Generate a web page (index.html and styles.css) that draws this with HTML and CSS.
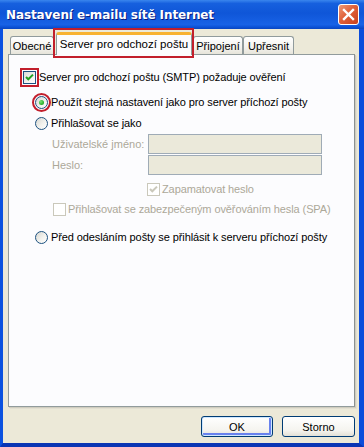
FILE: index.html
```html
<!DOCTYPE html>
<html lang="cs">
<head>
    <meta charset="UTF-8">
    <title>Nastavení e-mailu sítě Internet</title>
    <link rel="stylesheet" href="styles.css">
</head>
<body>
    <div class="window">
        <div class="titlebar">
            <span class="title">Nastavení e-mailu sítě Internet</span>
            <span class="close">
                <svg width="13" height="13" viewBox="0 0 13 13">
                    <path d="M2 2 L11 11 M11 2 L2 11" stroke="#fff" stroke-width="2.4" stroke-linecap="square"/>
                </svg>
            </span>
        </div>
        <div class="client">
            <div class="tabs">
                <div class="tab tab-general">Obecné</div>
                <div class="tab tab-active">Server pro odchozí poštu</div>
                <div class="tab tab-conn">Připojení</div>
                <div class="tab tab-adv">Upřesnit</div>
            </div>
            <div class="panel">
                <div class="row row-auth">
                    <span class="check flagged">
                        <svg width="11" height="11" viewBox="0 0 11 11"><path d="M2 5 L4.3 7.3 L9 2.6" fill="none" stroke="#21a121" stroke-width="2"/></svg>
                    </span>
                    <span class="label">Server pro odchozí poštu (SMTP) požaduje ověření</span>
                </div>
                <div class="row row-same">
                    <span class="radio selected flagged"><span class="dot"></span></span>
                    <span class="label">Použít stejná nastavení jako pro server příchozí pošty</span>
                </div>
                <div class="row row-login">
                    <span class="radio"></span>
                    <span class="label">Přihlašovat se jako</span>
                </div>
                <div class="field row-user">
                    <span class="field-label">Uživatelské jméno:</span>
                    <span class="input"></span>
                </div>
                <div class="field row-pass">
                    <span class="field-label">Heslo:</span>
                    <span class="input"></span>
                </div>
                <div class="row row-remember disabled">
                    <span class="check">
                        <svg width="11" height="11" viewBox="0 0 11 11"><path d="M2 5 L4.3 7.3 L9 2.6" fill="none" stroke="#cac8bb" stroke-width="2"/></svg>
                    </span>
                    <span class="label">Zapamatovat heslo</span>
                </div>
                <div class="row row-spa disabled">
                    <span class="check"></span>
                    <span class="label">Přihlašovat se zabezpečeným ověřováním hesla (SPA)</span>
                </div>
                <div class="row row-before">
                    <span class="radio"></span>
                    <span class="label">Před odesláním pošty se přihlásit k serveru příchozí pošty</span>
                </div>
            </div>
            <div class="buttons">
                <button class="btn btn-default">OK</button>
                <button class="btn">Storno</button>
            </div>
        </div>
    </div>
</body>
</html>
```
FILE: styles.css
```css
* {
    box-sizing: border-box;
    margin: 0;
    padding: 0;
}
body {
    font-family: 'Liberation Sans', Arial, sans-serif;
    font-size: 11px;
    color: #000;
    background: #ece9d8;
}
.window {
    width: 364px;
    height: 447px;
    display: flex;
    flex-direction: column;
    background: #0b4ddb;
}
.titlebar {
    height: 29px;
    display: flex;
    align-items: center;
    justify-content: space-between;
    padding: 0 5px 0 6px;
    background: linear-gradient(to bottom, #3a86ee 0%, #1660de 12%, #0f56d8 45%, #1862e6 85%, #0b50d4 94%, #0a45c0 100%);
}
.title {
    color: #fff;
    font-family: 'DejaVu Sans', sans-serif;
    font-weight: bold;
    font-size: 12px;
    text-shadow: 1px 1px 0 #0a1c80;
    letter-spacing: -0.1px;
}
.close {
    width: 21px;
    height: 21px;
    display: flex;
    align-items: center;
    justify-content: center;
    border: 1px solid #fff;
    border-radius: 3px;
    background: linear-gradient(135deg, #ee9a78 0%, #e0613a 45%, #c8401c 100%);
}
.client {
    flex: 1;
    display: flex;
    flex-direction: column;
    background: #ece9d8;
    border-left: 3px solid #0b52e0;
    border-right: 5px solid #0b4ddb;
    border-bottom: 4px solid #0a35b4;
    padding-top: 3px;
}
.tabs {
    height: 22px;
    display: flex;
    align-items: flex-end;
    padding-left: 7px;
    position: relative;
    z-index: 2;
}
.tab {
    height: 18px;
    display: flex;
    align-items: center;
    justify-content: center;
    border: 1px solid #919b9c;
    border-bottom: none;
    border-radius: 3px 3px 0 0;
    background: linear-gradient(to bottom, #fff 0%, #f4f3ee 60%, #e6e4da 100%);
    white-space: nowrap;
}
.tab-general {
    width: 44px;
}
.tab-active {
    position: relative;
    width: 136px;
    height: 23px;
    margin: 0 0 -1px 2px;
    padding-bottom: 2px;
    background: #fcfcfe;
    border-top: 3px solid #f8b232;
    font-size: 11.5px;
}
.tab-active::after {
    content: '';
    position: absolute;
    top: -7px;
    left: -4px;
    right: -3px;
    bottom: -3px;
    border: 2px solid #c21f2c;
}
.tab-conn {
    width: 50px;
    margin-left: 1px;
}
.tab-adv {
    width: 51px;
}
.panel {
    flex: 1;
    margin: 0 4px 0 5px;
    background: #fcfcfe;
    border: 1px solid #919b9c;
    border-right-color: #8c9190;
    box-shadow: 1px 1px 0 #d0cdbf, 2px 2px 0 #e2dfd1;
    padding: 14px 0 0 14px;
}
.row {
    height: 16px;
    display: flex;
    align-items: center;
    gap: 3px;
    white-space: nowrap;
    letter-spacing: -0.1px;
}
.row-same {
    margin: 9px 0 0 12px;
}
.row-login {
    margin: 5px 0 0 12px;
}
.row-remember {
    margin: 6px 0 0 124px;
    gap: 2px;
}
.row-spa {
    margin: 4px 0 0 30px;
    gap: 2px;
}
.row-before {
    margin: 12px 0 0 12px;
}
.disabled .label {
    color: #aca899;
}
.field {
    height: 20px;
    display: flex;
    align-items: center;
    margin-left: 29px;
}
.row-user {
    margin-top: 3px;
}
.row-pass {
    margin-top: 1px;
}
.field-label {
    width: 96px;
    color: #aca899;
}
.input {
    width: 174px;
    height: 20px;
    background: #ebe9da;
    border: 1px solid #9fabb6;
}
.check {
    position: relative;
    width: 13px;
    height: 13px;
    flex: none;
    display: flex;
    align-items: center;
    justify-content: center;
    border: 1px solid #1c5180;
    background: linear-gradient(135deg, #dcdcd7 0%, #f4f4f1 60%, #fff 100%);
}
.disabled .check {
    border-color: #cac8bb;
    background: #fff;
}
.radio {
    position: relative;
    width: 13px;
    height: 13px;
    flex: none;
    display: flex;
    align-items: center;
    justify-content: center;
    border: 1px solid #1c5180;
    border-radius: 50%;
    background: linear-gradient(135deg, #d6d6d0 0%, #f2f2ee 55%, #fff 100%);
}
.dot {
    width: 5px;
    height: 5px;
    border-radius: 50%;
    background: radial-gradient(circle at 35% 35%, #7be27a 0%, #2fb52f 60%, #1f8f1f 100%);
}
.flagged::after {
    content: '';
    position: absolute;
    top: -4px;
    left: -4px;
    right: -4px;
    bottom: -4px;
    border: 2px solid #c21f2c;
}
.radio.flagged::after {
    border-radius: 50%;
}
.buttons {
    height: 21px;
    display: flex;
    justify-content: flex-end;
    gap: 9px;
    margin: 9px 4px 6px 0;
}
.btn {
    width: 73px;
    height: 21px;
    font-family: inherit;
    font-size: 11px;
    color: #000;
    border: 1px solid #003c74;
    border-radius: 3px;
    background: linear-gradient(to bottom, #fff 0%, #f5f4ef 70%, #e3e0d6 100%);
}
.btn-default {
    width: 72px;
    box-shadow: inset 0 0 0 1px #cee7ff, inset -1px -1px 0 2px #6982ee;
}
```
